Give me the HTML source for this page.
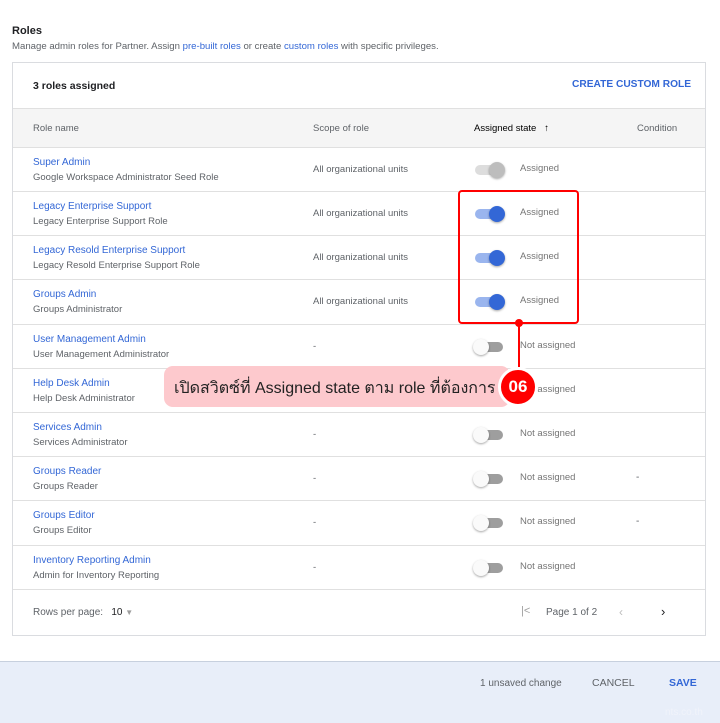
<!DOCTYPE html>
<html><head><meta charset="utf-8"><style>
*{margin:0;padding:0;box-sizing:border-box}
body{width:720px;height:723px;background:#fff;font-family:"Liberation Sans",Arial,sans-serif;position:relative;overflow:hidden;color:#202124}
.a{position:absolute;white-space:nowrap}
.card{position:absolute;left:12px;top:62px;width:694px;height:574px;border:1px solid #dadce0}
.hd{position:absolute;left:0;top:45px;width:692px;height:40px;background:#f5f5f5;border-top:1px solid #e0e0e0;border-bottom:1px solid #e0e0e0}
.row{position:absolute;left:0;width:692px;border-bottom:1px solid #e0e0e0}
.nm{position:absolute;left:20px;font-size:10px;color:#3367d6}
.sb{position:absolute;left:20px;font-size:9.5px;color:#5f6368}
.sc{position:absolute;left:300px;font-size:9.5px;color:#5f6368}
.st{position:absolute;left:507px;font-size:9.5px;color:#757575}
.cd{position:absolute;left:623px;font-size:10px;color:#5f6368}
.tr{position:absolute;left:462px;width:28px;height:10px;border-radius:5px}
.th{position:absolute;width:16px;height:16px;border-radius:50%;top:-3px;box-shadow:0 1px 2px rgba(0,0,0,.35)}
</style></head><body>
<div class="a" style="left:12px;top:25px;font-size:11px;font-weight:bold">Roles</div>
<div class="a" style="left:12px;top:41px;font-size:9.6px;color:#5f6368">Manage admin roles for Partner. Assign <span style="color:#3367d6">pre-built roles</span> or create <span style="color:#3367d6">custom roles</span> with specific privileges.</div>
<div class="card">
<div class="a" style="left:20px;top:17px;font-size:10.5px;font-weight:bold;color:#202124">3 roles assigned</div>
<div class="a" style="left:559px;top:16px;font-size:10.2px;font-weight:bold;color:#3367d6">CREATE CUSTOM ROLE</div>
<div class="hd">
<div class="a" style="left:20px;top:14px;font-size:9.5px;color:#5f6368">Role name</div>
<div class="a" style="left:300px;top:14px;font-size:9.5px;color:#5f6368">Scope of role</div>
<div class="a" style="left:461px;top:14px;font-size:9.5px;color:#000">Assigned state &nbsp;&nbsp;↑</div>
<div class="a" style="left:624px;top:14px;font-size:9.5px;color:#5f6368">Condition</div>
</div>
<div id="rows"></div>
<div class="a" style="left:20px;top:544px;font-size:10px;color:#5f6368">Rows per page: &nbsp;&nbsp;<span style="color:#202124">10</span> <span style="color:#9e9e9e;font-size:8px">▼</span></div>
<div class="a" style="left:508px;top:542px;font-size:11px;color:#9e9e9e">|&lt;</div>
<div class="a" style="left:533px;top:544px;font-size:10px;color:#5f6368">Page 1 of 2</div>
<div class="a" style="left:606px;top:542px;font-size:12px;color:#bdbdbd">‹</div>
<div class="a" style="left:648px;top:541px;font-size:13px;color:#202124">›</div>
</div>
<div class="a" style="left:0;top:661px;width:720px;height:62px;background:#e8eef9;border-top:1px solid #c7d0de"></div>
<div class="a" style="left:480px;top:678px;font-size:10px;color:#5f6368">1 unsaved change</div>
<div class="a" style="left:592px;top:677px;font-size:10.5px;color:#5f6368">CANCEL</div>
<div class="a" style="left:669px;top:677px;font-size:10.5px;font-weight:bold;color:#3367d6">SAVE</div>
<div class="a" style="left:665px;top:707px;font-size:10px;color:#f0f3fa">nts.co.th</div>
<div class="a" style="left:458px;top:190px;width:121px;height:134px;border:2px solid #f00;border-radius:4px"></div>
<div class="a" style="left:518px;top:322px;width:2px;height:45px;background:#f00"></div>
<div class="a" style="left:515px;top:319px;width:8px;height:8px;border-radius:50%;background:#f00"></div>
<div class="a" style="left:164px;top:366px;width:346px;height:41px;background:#fdc9cd;border-radius:9px"></div>
<div class="a" style="left:174px;top:376px;font-size:16px;color:#222;font-family:'Liberation Sans','Noto Sans CJK SC',sans-serif">เปิดสวิตซ์ที่ Assigned state ตาม role ที่ต้องการ</div>
<div class="a" style="left:498px;top:367px;width:40px;height:40px;border-radius:50%;background:#f00;border:3px solid #fff;color:#fff;font-weight:bold;font-size:17px;text-align:center;line-height:34px">06</div>
<script>
var d=[["Super Admin","Google Workspace Administrator Seed Role","All organizational units",2,""],
["Legacy Enterprise Support","Legacy Enterprise Support Role","All organizational units",1,""],
["Legacy Resold Enterprise Support","Legacy Resold Enterprise Support Role","All organizational units",1,""],
["Groups Admin","Groups Administrator","All organizational units",1,""],
["User Management Admin","User Management Administrator","-",0,""],
["Help Desk Admin","Help Desk Administrator","-",0,""],
["Services Admin","Services Administrator","-",0,""],
["Groups Reader","Groups Reader","-",0,"-"],
["Groups Editor","Groups Editor","-",0,"-"],
["Inventory Reporting Admin","Admin for Inventory Reporting","-",0,""]];
var tops=[85,129,173,217,262,306,350,394,438,483],h="";
d.forEach(function(r,i){var t=tops[i],hh=(i<9?tops[i+1]:527)-t;
var tc=r[3]==2?"#ddd":r[3]==1?"#9ab5ee":"#9e9e9e",thc=r[3]==2?"#bdbdbd":r[3]==1?"#3367d6":"#fafafa",tl=r[3]?14:-2;
h+='<div class="row" style="top:'+t+'px;height:'+hh+'px">'+
'<div class="nm" style="top:9px">'+r[0]+'</div><div class="sb" style="top:24px">'+r[1]+'</div>'+
'<div class="sc" style="top:16px">'+r[2]+'</div>'+
'<div class="tr" style="top:17px;background:'+tc+'"><div class="th" style="left:'+tl+'px;background:'+thc+'"></div></div>'+
'<div class="st" style="top:15px">'+(r[3]?"Assigned":"Not assigned")+'</div>'+
'<div class="cd" style="top:15px">'+r[4]+'</div></div>';});
document.getElementById("rows").innerHTML=h;
</script>
</body></html>
